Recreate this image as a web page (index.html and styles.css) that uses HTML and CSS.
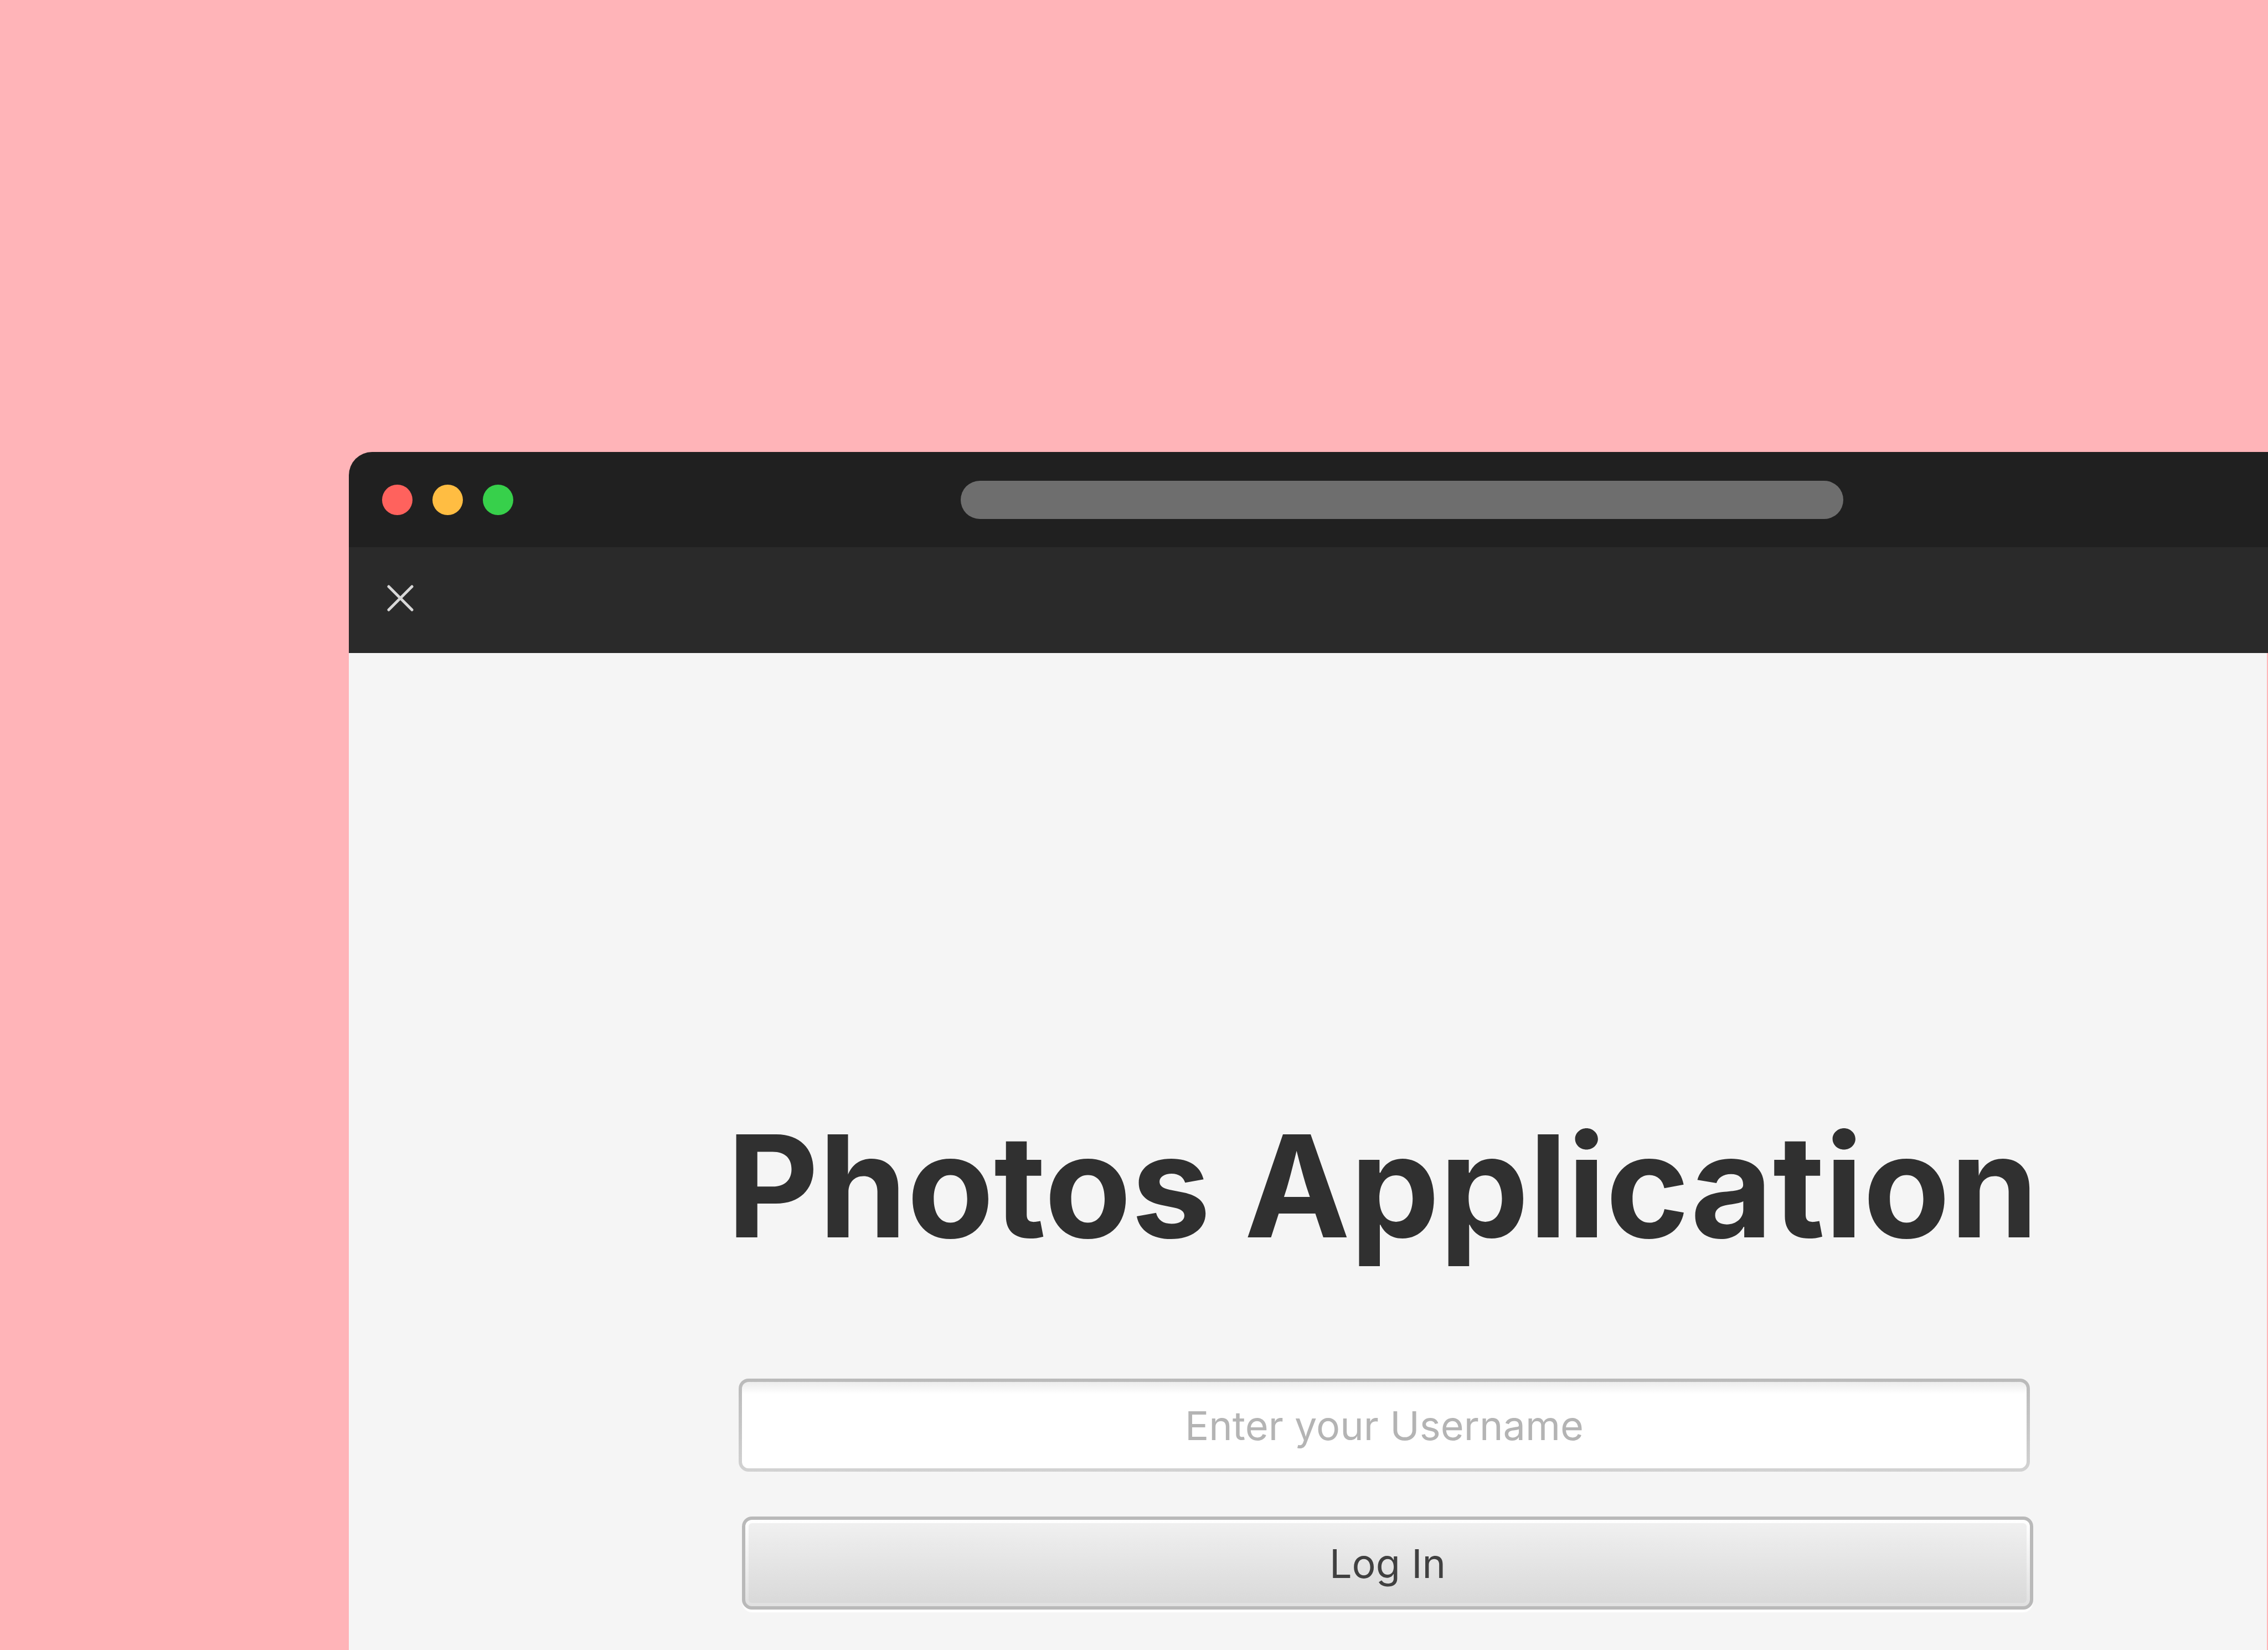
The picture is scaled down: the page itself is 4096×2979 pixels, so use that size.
FILE: index.html
```html
<!DOCTYPE html>
<html lang="en">
<head>
<meta charset="utf-8">
<title>Photos Application</title>
<link rel="stylesheet" href="styles.css">
</head>
<body>
<div class="window">
  <header class="titlebar">
    <div class="lights">
      <span class="light light-close"></span>
      <span class="light light-minimize"></span>
      <span class="light light-zoom"></span>
    </div>
    <div class="address"></div>
  </header>
  <div class="toolbar">
    <button class="close" type="button" aria-label="Close">
      <svg class="close-icon" viewBox="0 0 48 48" aria-hidden="true">
        <path d="M3 3 45 45M45 3 3 45"/>
      </svg>
    </button>
  </div>
  <main class="content">
    <h1 class="heading">Photos Application</h1>
    <form class="form">
      <input class="username" type="text" aria-label="Username" placeholder="Enter your Username">
      <button class="login" type="button">Log In</button>
    </form>
  </main>
</div>
</body>
</html>
```
FILE: styles.css
```css
* {
  box-sizing: border-box;
}

body {
  margin: 0;
  min-height: 100vh;
  display: flex;
  padding: 816px 0 0 630px;
  overflow: hidden;
  background: #ffb4b8;
  font-family: Inter, "Liberation Sans", sans-serif;
  color: #303030;
}

.window {
  flex: 1;
  min-width: 0;
  display: flex;
  flex-direction: column;
  border-top-left-radius: 42px;
  overflow: hidden;
}

.titlebar {
  display: grid;
  grid-template-columns: 1105fr 1594fr 767fr;
  align-items: center;
  height: 172px;
  background: #202020;
}

.lights {
  display: flex;
  gap: 36px;
  padding-left: 60px;
}

.light {
  width: 55px;
  height: 55px;
  border-radius: 50%;
}

.light-close {
  background: #ff625d;
}

.light-minimize {
  background: #ffbd42;
}

.light-zoom {
  background: #37d04b;
}

.address {
  height: 69px;
  border-radius: 36px;
  background: #6e6e6e;
}

.toolbar {
  display: flex;
  align-items: center;
  height: 191px;
  padding: 0 69px 8px;
  background: #2a2a2a;
}

.close {
  display: flex;
  padding: 0;
  border: 0;
  background: none;
}

.close-icon {
  width: 48px;
  height: 48px;
  fill: none;
  stroke: #d8d8d8;
  stroke-width: 5;
  stroke-linecap: round;
}

.content {
  flex: 1;
  display: flex;
  flex-direction: column;
  align-items: center;
  gap: 188px;
  margin-right: 2px;
  padding: 802px 422px 72px 704px;
  background: #f5f5f5;
}

.heading {
  margin: 0 12px 0 0;
  font-size: 256px;
  line-height: 320px;
  font-weight: 700;
  white-space: nowrap;
}

.form {
  width: 100%;
  display: flex;
  flex-direction: column;
  gap: 81px;
}

.username,
.login {
  height: 168px;
  border: 6px solid transparent;
  border-radius: 18px;
  font-family: inherit;
  font-size: 72px;
  font-weight: 400;
  text-align: center;
}

.username {
  margin-right: 6px;
  background:
    linear-gradient(#ececec, #ffffff 22px) padding-box,
    linear-gradient(#bababa, #d2d2d2) border-box;
}

.username::placeholder {
  color: #b4b4b4;
  opacity: 1;
}

/* Face, inner highlight and rim are stacked from the content box outwards. */
.login {
  margin-left: 6px;
  padding: 6px;
  color: #404040;
  background:
    linear-gradient(#f0f0f0, #d9d9d9) content-box,
    linear-gradient(#ffffff, #e0e0e0) padding-box,
    #b9b9b9 border-box;
  box-shadow: 0 6px 2px -1px #ffffff;
}
```
